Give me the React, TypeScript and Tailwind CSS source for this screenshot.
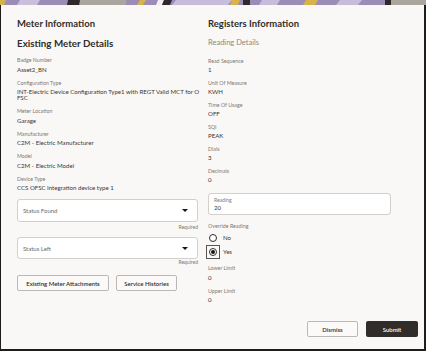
import React from 'react';

type Field = { label: string; value: React.ReactNode };

const meterFields: Field[] = [
  { label: 'Badge Number', value: 'Asset2_BN' },
  {
    label: 'Configuration Type',
    value: (
      <>
        <span className="whitespace-nowrap">INT-Electric Device Configuration Type1 with REGT Valid MCT for O</span>
        <br />
        FSC
      </>
    ),
  },
  { label: 'Meter Location', value: 'Garage' },
  { label: 'Manufacturer', value: 'C2M - Electric Manufacturer' },
  { label: 'Model', value: 'C2M - Electric Model' },
  { label: 'Device Type', value: 'CCS OFSC Integration device type 1' },
];

const registerFields: Field[] = [
  { label: 'Read Sequence', value: '1' },
  { label: 'Unit Of Measure', value: 'KWH' },
  { label: 'Time Of Usage', value: 'OFF' },
  { label: 'SQI', value: 'PEAK' },
  { label: 'Dials', value: '3' },
  { label: 'Decimals', value: '0' },
];

function TopStrip() {
  return (
    <svg width="426" height="5" viewBox="0 0 426 5" className="block">
      <rect width="426" height="5" fill="#9b8db6" />
      <polygon points="0,0 6,0 4,5 0,5" fill="#d5b04e" />
      <polygon points="20,0 40,0 37,5 17,5" fill="#c9c0db" />
      <polygon points="68,0 80,0 79,5 67,5" fill="#2e2a2b" />
      <rect x="80" y="0" width="46" height="5" fill="#aaa59d" />
      <polygon points="140,0 146,0 143,5 137,5" fill="#d9b24a" />
      <polygon points="158,0 164,0 162,5 156,5" fill="#f1eff4" />
      <polygon points="164,0 172,0 170,5 162,5" fill="#2e2a2b" />
      <polygon points="176,0 232,0 228,5 172,5" fill="#c7bddb" />
      <polygon points="232,0 240,0 238,5 230,5" fill="#d9b24a" />
      <rect x="243" y="0" width="7" height="5" fill="#2e2a2b" />
      <polygon points="262,0 280,0 277,5 259,5" fill="#c7bddb" />
      <polygon points="306,0 318,0 315,5 303,5" fill="#d9b24a" />
      <polygon points="340,0 362,0 358,5 336,5" fill="#c7bddb" />
      <rect x="385" y="0" width="6" height="5" fill="#2e2a2b" />
      <rect x="391" y="0" width="35" height="5" fill="#aaa59d" />
    </svg>
  );
}

function InfoField({ label, value }: Field) {
  return (
    <div>
      <div className="text-[5.3px] leading-[7px] text-[#7d7873]">{label}</div>
      <div className="mt-[2.5px] text-[6.1px] leading-[6px] text-[#3b3734]">{value}</div>
    </div>
  );
}

function SelectBox({ placeholder }: { placeholder: string }) {
  return (
    <div className="flex h-full items-center justify-between rounded-[3px] border border-[#d3cfca] bg-white pl-[5px] pr-[9px]">
      <span className="text-[6px] text-[#6f6b67]">{placeholder}</span>
      <span className="h-0 w-0 border-x-[3px] border-t-[3.5px] border-x-transparent border-t-[#161513]" />
    </div>
  );
}

function Radio({ label, checked }: { label: string; checked?: boolean }) {
  return (
    <div className="flex h-[14px] items-center">
      <div
        className={
          checked
            ? '-ml-[2px] flex h-[14px] w-[14px] items-center justify-center border border-[#5b5652]'
            : '-ml-[2px] flex h-[14px] w-[14px] items-center justify-center'
        }
      >
        <div className="flex h-[8px] w-[8px] items-center justify-center rounded-full border border-[#312d2a] bg-white">
          {checked ? <div className="h-[4px] w-[4px] rounded-full bg-[#161513]" /> : null}
        </div>
      </div>
      <span className="ml-[3px] text-[6.1px] text-[#3b3734]">{label}</span>
    </div>
  );
}

export default function App() {
  return (
    <div className="h-[351px] w-[430px] bg-white font-['Lato','Open_Sans',sans-serif]">
      <div className="flex h-full w-[426px] flex-col">
        <TopStrip />
        <div className="flex flex-1 flex-col border-b-2 border-l border-r-2 border-[#1f1d1c] bg-[#f9f8f6]">
          <div className="flex gap-[10px] pl-[16px] pt-[13px]">
            <div className="flex w-[181px] flex-col">
              <h2 className="text-[9.5px] font-bold leading-[12px] text-[#312d2a]">Meter Information</h2>
              <h3 className="mt-[7px] text-[9.8px] font-bold leading-[12px] text-[#312d2a]">
                Existing Meter Details
              </h3>
              <div className="mt-[8px] flex flex-col gap-[7px]">
                {meterFields.map((f) => (
                  <InfoField key={f.label} label={f.label} value={f.value} />
                ))}
              </div>
              <div className="mt-[8px] h-[23px]">
                <SelectBox placeholder="Status Found" />
              </div>
              <div className="mt-[2px] text-right text-[5px] leading-[7px] text-[#7d7873]">Required</div>
              <div className="mt-[6px] h-[22px]">
                <SelectBox placeholder="Status Left" />
              </div>
              <div className="text-right text-[5px] leading-[7px] text-[#7d7873]">Required</div>
              <div className="mt-[9px] flex gap-[7px]">
                <button className="h-[16px] w-[92px] rounded-[2px] border border-[#bcb8b3] bg-[#fbfaf9] text-[6px] font-semibold text-[#312d2a]">
                  Existing Meter Attachments
                </button>
                <button className="h-[16px] w-[61px] rounded-[2px] border border-[#bcb8b3] bg-[#fbfaf9] text-[6px] font-semibold text-[#312d2a]">
                  Service Histories
                </button>
              </div>
            </div>

            <div className="flex flex-1 flex-col">
              <h2 className="text-[9.5px] font-bold leading-[12px] text-[#312d2a]">Registers Information</h2>
              <div className="mt-[7px] text-[7.5px] leading-[12px] text-[#8c8782]">Reading Details</div>
              <div className="mt-[8.5px] flex flex-col gap-[6.5px]">
                {registerFields.map((f) => (
                  <InfoField key={f.label} label={f.label} value={f.value} />
                ))}
              </div>
              <div className="mt-[10px] h-[22px] w-[183px] rounded-[3px] border border-[#d3cfca] bg-white pl-[5px] pt-[3px]">
                <div className="text-[5px] leading-[6px] text-[#7d7873]">Reading</div>
                <div className="mt-[1px] text-[6.1px] leading-[8px] text-[#3b3734]">20</div>
              </div>
              <div className="mt-[8px] text-[5.3px] leading-[7px] text-[#7d7873]">Override Reading</div>
              <div className="mt-[1px] flex flex-col">
                <Radio label="No" />
                <Radio label="Yes" checked />
              </div>
              <div className="mt-[6px] flex flex-col gap-[7px]">
                <InfoField label="Lower Limit" value="0" />
                <InfoField label="Upper Limit" value="0" />
              </div>
            </div>
          </div>

          <div className="mt-auto flex justify-end gap-[8px] pb-[12px] pr-[6px]">
            <button className="h-[16px] w-[51px] rounded-[2px] border border-[#bcb8b3] bg-[#fbfaf9] text-[6px] font-semibold text-[#312d2a]">
              Dismiss
            </button>
            <button className="h-[16px] w-[52px] rounded-[2px] bg-[#312d2a] text-[6px] font-semibold text-white">
              Submit
            </button>
          </div>
        </div>
      </div>
    </div>
  );
}
